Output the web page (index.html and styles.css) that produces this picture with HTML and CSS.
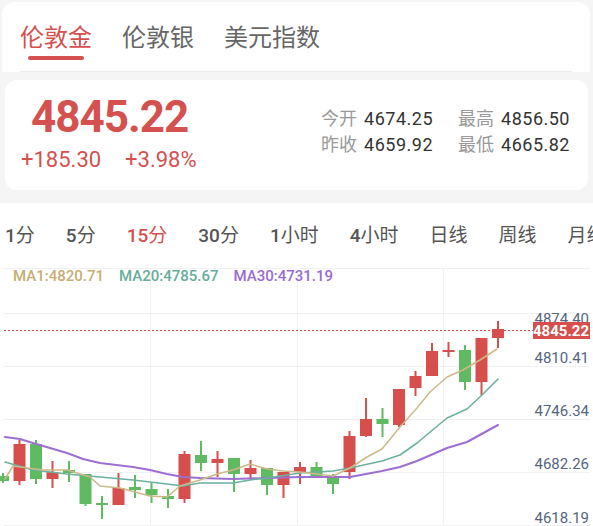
FILE: index.html
```html
<!DOCTYPE html>
<html lang="zh">
<head>
<meta charset="utf-8">
<title>伦敦金</title>
<link rel="stylesheet" href="styles.css">
</head>
<body>
<div class="head">
  <div class="tabs">
    <div class="tab active"><span>伦敦金</span><i class="bar"></i></div>
    <div class="tab"><span>伦敦银</span></div>
    <div class="tab"><span>美元指数</span></div>
  </div>
</div>
<div class="quote">
  <div class="q-left">
    <div class="price">4845.22</div>
    <div class="change"><span>+185.30</span><span>+3.98%</span></div>
  </div>
  <div class="stats">
    <div class="stat"><span class="k">今开</span><span class="v">4674.25</span></div>
    <div class="stat"><span class="k">最高</span><span class="v">4856.50</span></div>
    <div class="stat"><span class="k">昨收</span><span class="v">4659.92</span></div>
    <div class="stat"><span class="k">最低</span><span class="v">4665.82</span></div>
  </div>
</div>
<div class="chart-sec">
  <div class="periods">
    <span><b class="n">1</b>分</span><span><b class="n">5</b>分</span><span class="on"><b class="n">15</b>分</span><span><b class="n">30</b>分</span><span><b class="n">1</b>小时</span><span><b class="n">4</b>小时</span><span>日线</span><span>周线</span><span>月线</span>
  </div>
  <div class="plot">
    <svg viewBox="0 0 593 260" width="593" height="260" xmlns="http://www.w3.org/2000/svg">
      <g stroke="#f1f1f1" stroke-width="1" fill="none">
        <path d="M4 2.5H590M4 47.5H590M4 100.5H590M4 153.5H590M4 206.5H590M4 259.5H590"/>
        <path d="M150.5 2V260M297.5 2V260M443.5 2V260"/>
      </g>
      <g transform="translate(0,10)">
        <g fill="#5fba62" stroke="#5fba62" stroke-width="2">
          <path d="M3 197V207M36 164V208M69 185V206M85.5 198V230M102 220V243M135 199V222M151.5 207V227M168 213V232M201 165V195M234 182V216M267 192V219M316.5 186V201M333 198V218M382.5 132V161M465 69V114"/>
        </g>
        <g fill="#5fba62">
          <rect x="-3" y="200" width="12" height="5"/>
          <rect x="30" y="168" width="12" height="35"/>
          <rect x="63" y="194" width="12" height="3"/>
          <rect x="79.5" y="198" width="12" height="30"/>
          <rect x="96" y="227" width="12" height="2"/>
          <rect x="129" y="211" width="12" height="3"/>
          <rect x="145.5" y="213" width="12" height="6"/>
          <rect x="162" y="220" width="12" height="3"/>
          <rect x="195" y="179" width="12" height="8"/>
          <rect x="228" y="182" width="12" height="16"/>
          <rect x="261" y="192" width="12" height="17"/>
          <rect x="310.5" y="191" width="12" height="10"/>
          <rect x="327" y="202" width="12" height="6"/>
          <rect x="376.5" y="143" width="12" height="5"/>
          <rect x="459" y="74" width="12" height="32"/>
        </g>
        <g stroke="#d64f4c" stroke-width="2" fill="none">
          <path d="M19.5 164V209M52.5 185V212M118.5 197V229M184.5 175V227M217.5 175V201M250.5 184V204M283.5 196V222M300 186V208M349.5 155V203M366 122V161M399 113V151M415.5 95V120M432 67V100M448.5 66V81M481.5 62V119M498 45V72"/>
        </g>
        <g fill="#d64f4c">
          <rect x="13.5" y="168" width="12" height="37"/>
          <rect x="46.5" y="196" width="12" height="7"/>
          <rect x="112.5" y="212" width="12" height="17"/>
          <rect x="178.5" y="178" width="12" height="45"/>
          <rect x="211.5" y="183" width="12" height="4"/>
          <rect x="244.5" y="192" width="12" height="6"/>
          <rect x="277.5" y="196" width="12" height="13"/>
          <rect x="294" y="191" width="12" height="5"/>
          <rect x="343.5" y="160" width="12" height="36"/>
          <rect x="360" y="143" width="12" height="17"/>
          <rect x="393" y="113" width="12" height="36"/>
          <rect x="409.5" y="100" width="12" height="12"/>
          <rect x="426" y="75" width="12" height="25"/>
          <rect x="442.5" y="74" width="12" height="2"/>
          <rect x="475.5" y="62" width="12" height="44"/>
          <rect x="492" y="53" width="12" height="9"/>
        </g>
        <g fill="none" stroke-linejoin="round" stroke-linecap="round">
          <polyline stroke="#9d6fd1" stroke-width="2" points="5,161 20,163 33,167 67,177 83,183 100,187 133,191 150,194 167,198 183,201 200,202 233,203 267,202 300,201 350,201 382,195 400,191 417,185 447,172 467,166 498,149"/>
          <polyline stroke="#6cb0a0" stroke-width="1.6" points="5,186 33,194 67,198 100,201 133,204 167,208 183,210 200,207 233,207 250,204 267,202 300,197 333,195 350,192 382,185 400,179 417,167 447,142 467,133 482,119 498,103"/>
          <polyline stroke="#cdb888" stroke-width="1.5" points="5,203 13,190 43,194 67,194 90,201 100,210 120,212 150,220 167,221 180,210 200,204 217,198 233,194 250,188 267,193 283,195 300,196 333,200 350,192 367,181 382,173 400,151 417,132 430,116 447,101 463,94 480,84 497,73"/>
        </g>
        <path d="M4 54.5H533" stroke="#d64f4c" stroke-width="1" stroke-dasharray="2 2"/>
        <g class="ylab" text-anchor="end">
          <text x="589" y="47.5">4874.40</text>
          <text x="589" y="87">4810.41</text>
          <text x="589" y="139.5">4746.34</text>
          <text x="589" y="192.5">4682.26</text>
          <text x="589" y="246.5">4618.19</text>
        </g>
        <rect x="533" y="46" width="57" height="17" fill="#d64f4c"/>
        <text class="tag" x="589" y="59.5" text-anchor="end">4845.22</text>
      </g>
    </svg>
    <div class="legend">
      <span class="ma1">MA1:4820.71</span>
      <span class="ma20">MA20:4785.67</span>
      <span class="ma30">MA30:4731.19</span>
    </div>
  </div>
</div>
</body>
</html>
```
FILE: styles.css
```css
html, body {
  margin: 0;
  padding: 0;
  overflow: hidden;
}
body {
  background: #f5f5f5;
  font-family: Roboto, "Noto Sans CJK SC", sans-serif;
  width: 593px;
  height: 526px;
}
.head {
  margin: 2px 3px 0 2px;
  background: #fff;
  border-radius: 12px 12px 0 0;
}
.tabs {
  display: flex;
  gap: 30px;
  margin: 0 18px;
  padding-top: 20px;
  height: 70px;
  box-sizing: border-box;
  border-bottom: 1px solid #ececec;
}
.tab {
  display: flex;
  flex-direction: column;
  align-items: center;
  font-size: 24px;
  line-height: 32px;
  color: #666;
}
.tab.active {
  color: #d4514f;
}
.bar {
  display: block;
  width: 56px;
  height: 4px;
  border-radius: 2px;
  background: #d4514f;
  margin-top: 2px;
}
.quote {
  margin: 8px 5px 0;
  height: 110px;
  background: #fff;
  border-radius: 12px;
  display: flex;
  justify-content: space-between;
  padding: 15px 18px 0 16px;
  box-sizing: border-box;
  color: #d4514f;
}
.price {
  font-size: 44px;
  font-weight: 700;
  line-height: 44px;
  letter-spacing: -1px;
  margin-left: 10px;
}
.change {
  display: flex;
  gap: 24px;
  font-size: 22px;
  line-height: 22px;
  margin-top: 10px;
}
.stats {
  display: grid;
  grid-template-columns: auto auto;
  column-gap: 25px;
  font-size: 18px;
  line-height: 26px;
  padding-top: 11px;
  align-content: start;
}
.stat .k {
  color: #999;
  margin-right: 7px;
}
.stat .v {
  color: #333;
  letter-spacing: 0.5px;
}
.chart-sec {
  margin-top: 13px;
  background: #fff;
}
.periods {
  display: flex;
  gap: 31px;
  padding: 19px 0 0 5px;
  height: 63px;
  box-sizing: border-box;
  font-size: 19px;
  line-height: 28px;
  white-space: nowrap;
  overflow: hidden;
  color: #555;
}
.periods span {
  flex-shrink: 0;
}
.periods .n {
  font-weight: 500;
}
.periods .on {
  color: #d4514f;
}
.plot {
  position: relative;
  height: 260px;
}
.plot svg {
  display: block;
}
.ylab {
  font-family: Roboto, sans-serif;
  font-size: 15px;
  fill: #56657f;
}
.tag {
  font-family: Roboto, sans-serif;
  font-size: 15px;
  font-weight: 700;
  fill: #fff;
}
.legend {
  position: absolute;
  top: 0;
  left: 13px;
  display: flex;
  gap: 15px;
  font-size: 15px;
  line-height: 20px;
  font-weight: 500;
}
.ma1 { color: #c6ae74; }
.ma20 { color: #66ad9c; }
.ma30 { color: #9a6bd0; }
```
